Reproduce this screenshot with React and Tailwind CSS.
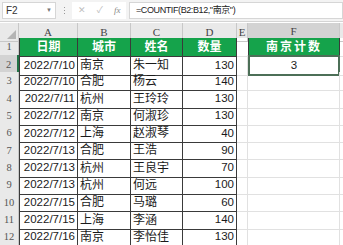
import React from "react";

const rows = [
  ["2022/7/10", "南京", "朱一知", "130"],
  ["2022/7/10", "合肥", "杨云", "140"],
  ["2022/7/11", "杭州", "王玲玲", "130"],
  ["2022/7/12", "南京", "何淑珍", "130"],
  ["2022/7/12", "上海", "赵淑琴", "40"],
  ["2022/7/13", "合肥", "王浩", "90"],
  ["2022/7/13", "杭州", "王良宇", "70"],
  ["2022/7/13", "杭州", "何远", "100"],
  ["2022/7/15", "合肥", "马璐", "60"],
  ["2022/7/15", "上海", "李涵", "140"],
  ["2022/7/16", "南京", "李怡佳", "130"],
];

const cols = "grid grid-cols-[19px_59px_53px_52px_54px_11px_92px_1fr]";
const font = { fontFamily: '"Liberation Sans", "Noto Sans CJK SC", sans-serif' };
const serif = { fontFamily: '"Liberation Serif", serif' };

const FormulaBar = () => (
  <div className="h-[22px] bg-[#f3f3f3] flex items-center border-b border-[#d4d4d4] text-[10px] text-[#333]">
    <div className="ml-[2px] w-[54px] h-[17px] bg-white border border-[#d6d6d6] flex items-center justify-between px-[3px]">
      <span>F2</span>
      <span className="text-[6px] text-[#777]">▼</span>
    </div>
    <div className="w-[16px] flex flex-col items-center gap-[2px]">
      <span className="w-[1px] h-[1px] bg-[#999]" />
      <span className="w-[1px] h-[1px] bg-[#999]" />
      <span className="w-[1px] h-[1px] bg-[#999]" />
    </div>
    <div className="w-[54px] h-[17px] bg-white flex items-center justify-around text-[#c0c0c0] text-[9px]">
      <span>✕</span>
      <span>✓</span>
      <span className="italic text-[#888]" style={serif}>fx</span>
    </div>
    <div className="ml-[3px] flex-1 h-[17px] bg-white border border-[#d6d6d6] flex items-center pl-[6px] text-[9px] tracking-[-0.4px] text-[#222]">
      =COUNTIF(B2:B12,"南京")
    </div>
  </div>
);

const ColHeaders = () => (
  <div className={`${cols} h-[15px] mt-[1px] bg-[#e9e9e9] text-[11px] text-[#444]`} style={serif}>
    <div className="relative border-r border-b border-[#c8c8c8]">
      <span className="absolute right-[2px] bottom-[2px] w-0 h-0 border-l-[9px] border-l-transparent border-b-[9px] border-b-[#b4b4b4]" />
    </div>
    {["A", "B", "C", "D", "E"].map((c) => (
      <div key={c} className="flex items-center justify-center border-r border-b border-[#c8c8c8]">{c}</div>
    ))}
    <div className="flex items-center justify-center bg-[#d3d3d3] border-r border-[#c8c8c8] border-b-2 border-b-[#217346]">F</div>
    <div className="border-b border-[#c8c8c8]" />
  </div>
);

const RowHead = ({ n, active }) => (
  <div
    className={`flex items-center justify-center text-[10.5px] text-[#555] border-b border-[#c8c8c8] ${
      active ? "bg-[#d3d3d3] border-r-2 border-r-[#217346]" : "bg-[#e9e9e9] border-r border-r-[#c8c8c8]"
    }`}
    style={serif}
  >
    {n}
  </div>
);

const Grid = ({ last }) => <div className={`border-r border-b border-[#e1e1e1] ${last ? "border-r-0" : ""}`} />;

export default function App() {
  return (
    <div className="w-[343px] h-[245px] overflow-hidden bg-white" style={font}>
      <FormulaBar />
      <ColHeaders />
      <div className={`${cols} h-[17px]`}>
        <RowHead n="1" />
        {["日期", "城市", "姓名", "数量"].map((h, i) => (
          <div
            key={h}
            className={`bg-[#15a34b] text-white font-bold text-[12px] flex items-center justify-center border-b border-r border-[#3a3a3a] ${i === 0 ? "border-l" : ""}`}
          >
            {h}
          </div>
        ))}
        <div className="border-b border-[#e1e1e1]" />
        <div className="bg-[#15a34b] text-white font-bold text-[12px] flex items-center justify-center border border-t-0 border-[#3a3a3a] tracking-[2px]">
          南京计数
        </div>
        <div className="border-b border-[#e1e1e1]" />
      </div>
      {rows.map((r, i) => (
        <div key={i} className={`${cols} h-[17.3px] text-[12px] text-[#1a1a1a]`}>
          <RowHead n={i + 2} active={i === 0} />
          <div className="flex items-center justify-end pr-[2px] text-[11.5px] border-l border-r border-b border-[#3a3a3a]">{r[0]}</div>
          <div className="flex items-center pl-[2px] border-r border-b border-[#3a3a3a]">{r[1]}</div>
          <div className="flex items-center pl-[2px] border-r border-b border-[#3a3a3a]">{r[2]}</div>
          <div className="flex items-center justify-end pr-[2px] text-[11.5px] border-r border-b border-[#3a3a3a]">{r[3]}</div>
          <Grid />
          {i === 0 ? (
            <div className="flex items-center justify-center text-[11.5px] border-2 border-[#4c6f57]">3</div>
          ) : (
            <Grid />
          )}
          <Grid last />
        </div>
      ))}
      <div className={`${cols} h-[17px]`}>
        <RowHead n="" />
        <div className="border-r border-[#e1e1e1]" />
        <div className="border-r border-[#e1e1e1]" />
        <div className="border-r border-[#e1e1e1]" />
        <div className="border-r border-[#e1e1e1]" />
        <div className="border-r border-[#e1e1e1]" />
        <div className="border-r border-[#e1e1e1]" />
      </div>
    </div>
  );
}
